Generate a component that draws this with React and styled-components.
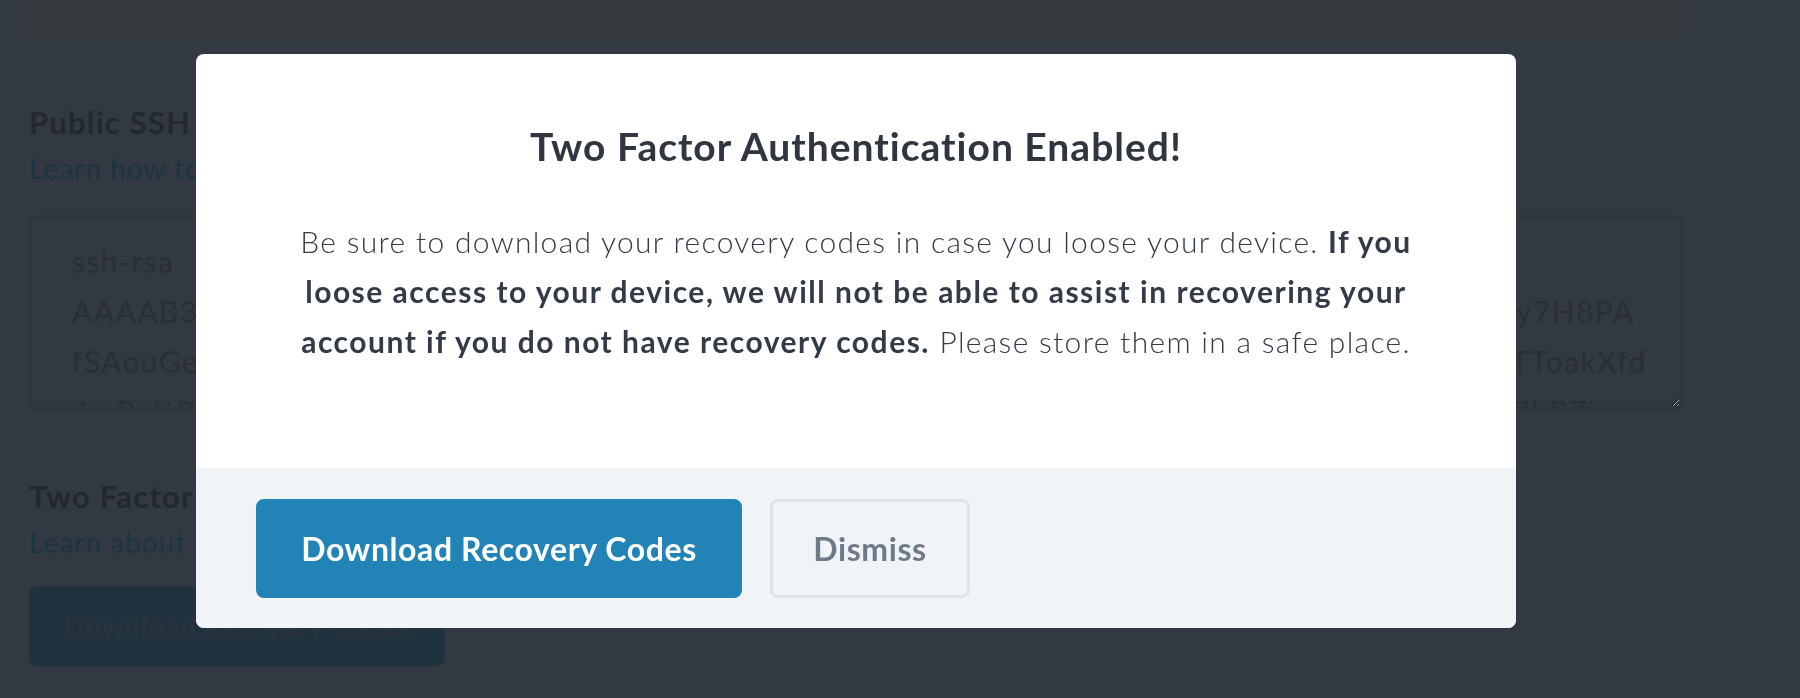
import React from "react";
import styled, { createGlobalStyle } from "styled-components";

const Global = createGlobalStyle`
  html, body {
    margin: 0;
    padding: 0;
    background: #333942;
    overflow: hidden;
  }
  body {
    font-family: Lato, "Open Sans", sans-serif;
  }
  * { box-sizing: border-box; }
`;

const Page = styled.div`
  width: 1654px;
  margin-left: 29px;
  display: flex;
  flex-direction: column;
`;

const TopBar = styled.div`
  height: 40px;
  background: #36393b;
  border-radius: 0 0 8px 8px;
`;

const SectionTitle = styled.h2`
  margin: ${(p) => p.$top}px 0 0;
  font-size: 31px;
  line-height: 36px;
  font-weight: 700;
  letter-spacing: 1.2px;
  color: #232830;
`;

const SectionLink = styled.a`
  margin-top: 11px;
  font-size: 28px;
  line-height: 34px;
  font-weight: 400;
  letter-spacing: 1px;
  color: #1c3542;
  text-decoration: none;
`;

const KeyArea = styled.textarea`
  margin-top: 30px;
  height: 195px;
  width: 100%;
  padding: 18px 40px;
  border: 3px solid #2f353c;
  border-radius: 8px;
  background: #333942;
  color: #2a2f36;
  font-family: Lato, sans-serif;
  font-size: 30px;
  letter-spacing: 1.4px;
  line-height: 50px;
  white-space: pre;
  overflow: hidden;
  resize: vertical;
  outline: none;
`;

const GhostButton = styled.button`
  margin-top: 27px;
  align-self: flex-start;
  width: 416px;
  height: 80px;
  border: none;
  border-radius: 8px;
  background: #21323f;
  color: #2b343d;
  font-family: Lato, sans-serif;
  font-size: 28px;
  font-weight: 700;
  letter-spacing: 0.6px;
  padding: 0 34px;
  text-align: left;
`;

const Overlay = styled.div`
  position: fixed;
  inset: 0;
  padding: 54px 0 0 196px;
  display: flex;
  align-items: flex-start;
`;

const Modal = styled.div`
  width: 1320px;
  background: #ffffff;
  border-radius: 8px;
  overflow: hidden;
  display: flex;
  flex-direction: column;
`;

const ModalBody = styled.div`
  height: 414px;
  padding: 70px 40px 0;
  display: flex;
  flex-direction: column;
  align-items: center;
`;

const ModalTitle = styled.h1`
  margin: 0;
  font-size: 39px;
  line-height: 44px;
  font-weight: 700;
  letter-spacing: 1px;
  color: #2f3640;
  text-align: center;
`;

const ModalText = styled.p`
  margin: 48px 0 0;
  font-size: 30px;
  line-height: 50px;
  font-weight: 300;
  letter-spacing: 1.3px;
  color: #333b46;
  text-align: center;

  strong {
    font-weight: 700;
    letter-spacing: 1.5px;
  }
`;

const ModalFooter = styled.div`
  height: 160px;
  background: #f0f4f7;
  padding: 0 60px;
  display: flex;
  align-items: center;
  gap: 28px;
`;

const Button = styled.button`
  height: 99px;
  padding: 0;
  border-radius: 8px;
  font-family: Lato, sans-serif;
  font-size: 32px;
  font-weight: 700;
  letter-spacing: 0.6px;
  cursor: pointer;
  border: 3px solid ${(p) => (p.$primary ? "#2283b6" : "#dde3e9")};
  background: ${(p) => (p.$primary ? "#2283b6" : "transparent")};
  color: ${(p) => (p.$primary ? "#ffffff" : "#6e7a88")};
  width: ${(p) => p.$width}px;
`;

const keyText = [
  "ssh-rsa",
  "AAAAB3NzaC1yc2EAAAADAQABAAABAQC7kLq9xWm2vR4tYpZs8nJfHcE3uGd5bVaK1oQwXiT6hDy7H8PA",
  "fSAouGeYb1nQ5vKx3LmTz8RwPj6HdC2sFq0UaVi9XkNe4BgJo7MtZy1WpLr5ScQhE3uD8fGvKp3WnTToakXfd",
  "4mPeftPq2RvXs9LkN3wYc6ZbHa1JdE7uTg4oFiMn5QzC8rWxSp0VlKy2GhBe6jUt3Aq9DfNRx7Gq2DZhPZi",
].join("\n");

export default function App() {
  return (
    <>
      <Global />
      <Page>
        <TopBar />
        <SectionTitle $top={64}>Public SSH Key</SectionTitle>
        <SectionLink href="#">Learn how to generate an SSH key</SectionLink>
        <KeyArea readOnly wrap="off" value={keyText} />
        <SectionTitle $top={68}>Two Factor Authentication</SectionTitle>
        <SectionLink href="#">Learn about how two factor authentication works</SectionLink>
        <GhostButton>Download Recovery Codes</GhostButton>
      </Page>
      <Overlay>
        <Modal>
          <ModalBody>
            <ModalTitle>Two Factor Authentication Enabled!</ModalTitle>
            <ModalText>
              Be sure to download your recovery codes in case you loose your device. <strong>If you</strong>
              <br />
              <strong>loose access to your device, we will not be able to assist in recovering your</strong>
              <br />
              <strong>account if you do not have recovery codes.</strong> Please store them in a safe place.
            </ModalText>
          </ModalBody>
          <ModalFooter>
            <Button $primary $width={486}>Download Recovery Codes</Button>
            <Button $width={200}>Dismiss</Button>
          </ModalFooter>
        </Modal>
      </Overlay>
    </>
  );
}
